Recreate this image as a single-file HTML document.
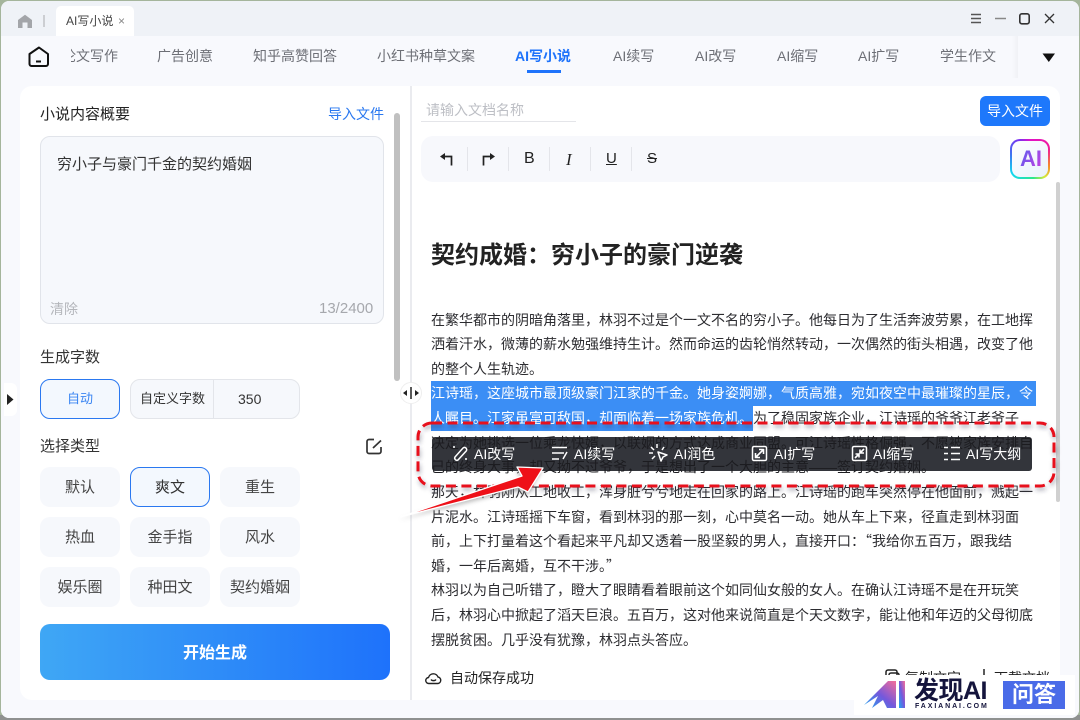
<!DOCTYPE html>
<html lang="zh"><head><meta charset="utf-8"><title>AI写小说</title>
<style>
*{box-sizing:border-box;margin:0;padding:0}
html,body{width:1080px;height:720px;overflow:hidden;background:linear-gradient(180deg,#a5b59c 0,#a5b59c 715px,#8f9190 715px);font-family:"Liberation Sans","Noto Sans CJK SC",sans-serif}
#w{position:absolute;left:1px;top:1px;width:1078px;height:717px;background:#f7f8fc;border-radius:8px;overflow:hidden}
#a{position:absolute;left:-1px;top:-1px;width:1080px;height:720px}
.t{position:absolute;white-space:nowrap;line-height:20px}
.b{position:absolute}
.n{font-size:14px;color:#6d6f76;top:46px}
.chip{position:absolute;width:80px;height:40px;border-radius:10px;background:#f6f8fc;font-size:15px;color:#444;text-align:center;line-height:42px}
.l{position:absolute;left:431px;font-size:14px;line-height:20px;color:#2c2c30;white-space:nowrap}
.m{position:absolute;top:444px;font-size:14px;line-height:20px;color:#fff;white-space:nowrap}
.q{font-family:"Noto Sans CJK SC",sans-serif}
svg{position:absolute;overflow:visible}
</style></head><body><div id="w"><div id="a">
<div class="b" style="left:0;top:0;width:1080px;height:36px;background:#eff2f7"></div>
<div class="b" style="left:0;top:36px;width:1080px;height:684px;background:#f8f9fd"></div>
<svg style="left:17px;top:14px" width="16" height="15" viewBox="0 0 16 15"><path d="M1 14V6L8 .8 15 6v8h-4.500V8.500h-5V14z" fill="#a3a5a9"/></svg>
<div class="b" style="left:43px;top:15px;width:2px;height:12px;background:#ccced2"></div>
<div class="b" style="left:56px;top:6px;width:78px;height:30px;background:#fff;border-radius:5px 5px 0 0"></div>
<div class="t" style="left:66px;top:11px;font-size:12px;color:#444">AI写小说</div>
<div class="t" style="left:118px;top:11px;font-size:12px;color:#888">×</div>
<svg style="left:970px;top:12px" width="80" height="18" fill="none" stroke="#555"><path d="M1 2.500H11M1 6.500H11M1 10.500H11" stroke-width="1.500"/><path d="M25 6.500H36" stroke="#888" stroke-width="1.500"/><rect x="49.800" y="1.800" width="9.400" height="10" rx="2" stroke="#333" stroke-width="1.600"/><path d="M75 2L84 11M84 2L75 11" stroke="#333" stroke-width="1.300"/></svg>
<svg style="left:28px;top:46px" width="22" height="22" fill="none" stroke="#111" stroke-width="2"><path d="M1.500 8L11 1.500 20 8v10a2 2 0 0 1-2 2H3.500a2 2 0 0 1-2-2z" stroke-linejoin="round"/><path d="M8 15.500H13"/></svg>
<div class="b n" style="left:71px;width:47px;height:20px;overflow:hidden;line-height:20px;white-space:nowrap"><span style="display:block;margin-left:-9px">论文写作</span></div>
<div class="t n" style="left:157px">广告创意</div>
<div class="t n" style="left:253px">知乎高赞回答</div>
<div class="t n" style="left:377px">小红书种草文案</div>
<div class="t n" style="left:515px;color:#1e73fb;font-weight:700">AI写小说</div>
<div class="b" style="left:527px;top:70px;width:34px;height:3px;background:#1e73fb"></div>
<div class="t n" style="left:613px">AI续写</div>
<div class="t n" style="left:695px">AI改写</div>
<div class="t n" style="left:777px">AI缩写</div>
<div class="t n" style="left:858px">AI扩写</div>
<div class="t n" style="left:940px">学生作文</div>
<div class="b" style="left:1012px;top:36px;width:6px;height:42px;background:linear-gradient(90deg,#f8f9fd,#f0f1f5)"></div>
<svg style="left:1042px;top:53px" width="14" height="10"><path d="M.5 .5H13L6.800 9z" fill="#111"/></svg>

<div class="b" style="left:20px;top:86px;width:391px;height:614px;background:#fff;border-radius:12px 0 0 12px"></div>
<div class="b" style="left:410px;top:86px;width:650px;height:614px;background:#fff;border-radius:0 12px 12px 0;border-left:2px solid #eaebef"></div>
<div class="t" style="left:40px;top:105px;font-size:15px;color:#222">小说内容概要</div>
<div class="t" style="left:328px;top:104px;font-size:14px;color:#2a78f0">导入文件</div>
<div class="b" style="left:394px;top:113px;width:6px;height:268px;border-radius:3px;background:#c0c0c0"></div>
<div class="b" style="left:40px;top:136px;width:344px;height:188px;border-radius:10px;background:#f6f8fc;border:1px solid #e1e4ea"></div>
<div class="t" style="left:57px;top:155px;font-size:15px;color:#333">穷小子与豪门千金的契约婚姻</div>
<div class="t" style="left:50px;top:299px;font-size:14px;color:#b4b6bb">清除</div>
<div class="t" style="left:319px;top:299px;font-size:15px;color:#a6a8ad">13/2400</div>
<div class="t" style="left:40px;top:348px;font-size:15px;color:#333">生成字数</div>
<div class="chip" style="left:40px;top:379px;background:#f3f8fe;border:1px solid #2a78f0;color:#3a85f2;font-size:13px;line-height:38px">自动</div>
<div class="b" style="left:130px;top:379px;width:170px;height:40px;border-radius:10px;background:#f6f8fc;border:1px solid #e3e5ea"></div>
<div class="b" style="left:213px;top:380px;width:1px;height:38px;background:#e3e5ea"></div>
<div class="t" style="left:140px;top:389px;font-size:13px;color:#333">自定义字数</div>
<div class="t" style="left:238px;top:389px;font-size:14px;color:#333">350</div>
<div class="t" style="left:40px;top:437px;font-size:15px;color:#333">选择类型</div>
<svg style="left:366px;top:438px" width="17" height="17" fill="none" stroke="#333" stroke-width="1.700"><path d="M8 1.500H3a2 2 0 0 0-2 2v10a2 2 0 0 0 2 2h10a2 2 0 0 0 2-2V9"/><path d="M7 10L15 2.500"/></svg>
<div class="chip" style="left:40px;top:467px">默认</div>
<div class="chip" style="left:130px;top:467px;background:#f3f8fe;border:1px solid #2a78f0;color:#333;line-height:40px">爽文</div>
<div class="chip" style="left:220px;top:467px">重生</div>
<div class="chip" style="left:40px;top:517px">热血</div>
<div class="chip" style="left:130px;top:517px">金手指</div>
<div class="chip" style="left:220px;top:517px">风水</div>
<div class="chip" style="left:40px;top:567px">娱乐圈</div>
<div class="chip" style="left:130px;top:567px">种田文</div>
<div class="chip" style="left:220px;top:567px">契约婚姻</div>
<div class="b" style="left:40px;top:624px;width:350px;height:56px;border-radius:10px;background:linear-gradient(90deg,#3fa7f5,#1e72fb);color:#fff;font-size:16px;font-weight:700;text-align:center;line-height:59px">开始生成</div>
<div class="b" style="left:4px;top:383px;width:13px;height:33px;background:#fff;border-radius:0 6px 6px 0"></div>
<svg style="left:7px;top:394px" width="7" height="11"><path d="M0 0L6.500 5.500 0 11z" fill="#222"/></svg>
<div class="b" style="left:400px;top:382px;width:22px;height:22px;border-radius:50%;background:#fff;border:1px solid #eee"></div>
<svg style="left:403px;top:387px" width="16" height="12"><path d="M0 6L4 3V9zM16 6L12 3V9z" fill="#222"/><path d="M8 0V12" stroke="#222" stroke-width="1.500"/></svg>

<div class="t" style="left:426px;top:100px;font-size:14px;color:#bdbfc5">请输入文档名称</div>
<div class="b" style="left:421px;top:121px;width:155px;height:1px;background:#e4e5e9"></div>
<div class="b" style="left:980px;top:96px;width:70px;height:30px;background:#1e78fb;border-radius:6px;color:#fff;font-size:14px;text-align:center;line-height:30px">导入文件</div>
<div class="b" style="left:421px;top:136px;width:579px;height:46px;background:#f7f8fc;border-radius:12px"></div>
<svg style="left:440px;top:152px" width="170" height="16" fill="none"><path d="M0 4.500L5 1V8z" fill="#222"/><path d="M4 4.500H11.500V13.500" stroke="#222" stroke-width="1.700"/><path d="M43.500 13.500V4.500H51" stroke="#222" stroke-width="1.700"/><path d="M55 4.500L50 1V8z" fill="#222"/></svg>
<div class="b" style="left:467px;top:147px;width:1px;height:24px;background:#e4e5ea"></div>
<div class="b" style="left:508px;top:147px;width:1px;height:24px;background:#e4e5ea"></div>
<div class="b" style="left:549px;top:147px;width:1px;height:24px;background:#e4e5ea"></div>
<div class="b" style="left:590px;top:147px;width:1px;height:24px;background:#e4e5ea"></div>
<div class="b" style="left:631px;top:147px;width:1px;height:24px;background:#e4e5ea"></div>
<div class="t" style="left:524px;top:149px;font-size:16px;color:#222">B</div>
<div class="t" style="left:566px;top:150px;font-size:17px;color:#222;font-style:italic;font-family:'Liberation Serif',serif">I</div>
<div class="t" style="left:606px;top:149px;font-size:15px;color:#222;text-decoration:underline">U</div>
<div class="t" style="left:647px;top:149px;font-size:15px;color:#222;text-decoration:line-through">S</div>
<div class="b" style="left:1010px;top:139px;width:40px;height:40px;border-radius:10px;background:conic-gradient(from 0deg,#e012c8,#f01a9a 60deg,#f58a2a 110deg,#d8e83a 140deg,#2ee88a 170deg,#14d8f0 230deg,#3a7af0 280deg,#7a30f0 330deg,#e012c8)"></div>
<div class="b" style="left:1012px;top:141px;width:36px;height:36px;border-radius:8px;background:linear-gradient(135deg,#fff,#e9f1fc)"></div>
<div class="t" style="left:1020px;top:149px;font-size:22px;font-weight:700;background:linear-gradient(120deg,#5a5ef0,#c83ee0);-webkit-background-clip:text;background-clip:text;color:transparent">AI</div>
<div class="b" style="left:1056px;top:182px;width:4px;height:320px;background:#d0d0d0;border-radius:2px"></div>

<div class="t" style="left:431px;top:241px;font-size:24px;line-height:30px;font-weight:700;color:#222">契约成婚：穷小子的豪门逆袭</div>

<div class="b" style="left:431px;top:381px;width:605px;height:25px;background:#3b8ef5"></div>
<div class="b" style="left:431px;top:406px;width:322px;height:25px;background:#3b8ef5"></div>
<div class="b" style="left:432px;top:437px;width:600px;height:34px;background:#33353b;border-radius:3px"></div>
<div class="l" style="top:310px">在繁华都市的阴暗角落里，林羽不过是个一文不名的穷小子。他每日为了生活奔波劳累，在工地挥</div>
<div class="l" style="top:334px">洒着汗水，微薄的薪水勉强维持生计。然而命运的齿轮悄然转动，一次偶然的街头相遇，改变了他</div>
<div class="l" style="top:359px">的整个人生轨迹。</div>
<div class="l" style="top:383px;color:#fff">江诗瑶，这座城市最顶级豪门江家的千金。她身姿婀娜，气质高雅，宛如夜空中最璀璨的星辰，令</div>
<div class="l" style="top:408px;color:#fff">人瞩目。江家虽富可敌国，却面临着一场家族危机。</div>
<div class="l" style="top:408px;left:753px">为了稳固家族企业，江诗瑶的爷爷江老爷子</div>
<div class="l" style="top:433px;color:#1c1c20">决定为她挑选一位乘龙快婿，以联姻的方式达成商业同盟。可江诗瑶性格倔强，不愿被家族安排自</div>
<div class="l" style="top:457px;color:#1c1c20">己的终身大事，却又拗不过爷爷，于是想出了一个大胆的主意——签订契约婚姻。</div>
<div class="l" style="top:482px">那天，林羽刚从工地收工，浑身脏兮兮地走在回家的路上。江诗瑶的跑车突然停在他面前，溅起一</div>
<div class="l" style="top:507px">片泥水。江诗瑶摇下车窗，看到林羽的那一刻，心中莫名一动。她从车上下来，径直走到林羽面</div>
<div class="l" style="top:531px">前，上下打量着这个看起来平凡却又透着一股坚毅的男人，直接开口：<span class="q">“</span>我给你五百万，跟我结</div>
<div class="l" style="top:556px">婚，一年后离婚，互不干涉。<span class="q">”</span></div>
<div class="l" style="top:580px">林羽以为自己听错了，瞪大了眼睛看着眼前这个如同仙女般的女人。在确认江诗瑶不是在开玩笑</div>
<div class="l" style="top:605px">后，林羽心中掀起了滔天巨浪。五百万，这对他来说简直是个天文数字，能让他和年迈的父母彻底</div>
<div class="l" style="top:630px">摆脱贫困。几乎没有犹豫，林羽点头答应。</div>

<svg style="left:450px;top:444px" width="590" height="20" fill="none" stroke="#fff" stroke-width="1.500">
<path d="M5 13L13 4a2.200 2.200 0 0 1 3.200 3L8 16a2.200 2.200 0 0 1-3-3z"/><circle cx="4" cy="3" r="1" fill="#fff" stroke="none"/><circle cx="16" cy="15" r="1" fill="#fff" stroke="none"/>
<path d="M102 3.500H117M102 9H114M102 15H109M113 15L117 8"/>
<path d="M207 0V4M201 3L204 6M199 9H203M202 15L205 12M214 3L212 6"/><path d="M208 8L217 11 213 13 211 17z" stroke-linejoin="round"/>
<rect x="302.500" y="2.500" width="14" height="14" rx="1.500"/><path d="M306 13L313 6M309 5.500H313.500V10M305.500 9V13.500H310" stroke-width="1.600"/>
<rect x="402.500" y="2.500" width="14" height="14" rx="1.500"/><path d="M405 14L408.500 10.500M414 5L410.500 8.500M405.500 10H409V13.500M410 5.500V9H414" stroke-width="1.600"/>
<path d="M494 3.500H498M494 9.500H498M494 15.500H498M501 3.500H510M501 9.500H510M501 15.500H510"/>
</svg>
<div class="m" style="left:474px">AI改写</div>
<div class="m" style="left:574px">AI续写</div>
<div class="m" style="left:674px">AI润色</div>
<div class="m" style="left:774px">AI扩写</div>
<div class="m" style="left:873px">AI缩写</div>
<div class="m" style="left:966px">AI写大纲</div>

<svg style="left:0;top:0" width="1080" height="720" fill="none">
<defs><filter id="sh" x="-10%" y="-30%" width="120%" height="170%"><feGaussianBlur stdDeviation="2"/></filter></defs>
<rect x="418" y="423" width="636" height="63" rx="14" stroke="#33334a" stroke-opacity=".4" stroke-width="3" stroke-dasharray="10 5.500" transform="translate(1 3)" filter="url(#sh)"/>
<rect x="418" y="423" width="636" height="63" rx="14" stroke="#e8101c" stroke-width="3" stroke-dasharray="10 5.500"/>
<path d="M400 517L522 476 517 467 543 468 528 492 518 487z" fill="#777" opacity=".5" transform="translate(-1 3)" filter="url(#sh)"/>
<path d="M400 517L522 476 517 467 543 468 528 492 518 487z" fill="#ee1018" stroke="#fff" stroke-width="1.300" stroke-linejoin="round"/>
</svg>

<svg style="left:425px;top:671px" width="17" height="14" fill="none" stroke="#222" stroke-width="1.400"><path d="M4 12.500a3 3 0 0 1-.5-6A5 5 0 0 1 13 6a3.300 3.300 0 0 1 0 6.500zM6 8.500c1 1.500 4 1.500 5 0"/></svg>
<div class="t" style="left:450px;top:668px;font-size:14px;color:#222">自动保存成功</div>
<svg style="left:885px;top:669px" width="16" height="8" fill="none" stroke="#222" stroke-width="1.500"><rect x="1" y="1" width="11" height="12" rx="2"/><rect x="4" y="4" width="10" height="10" rx="2"/></svg>
<div class="t" style="left:905px;top:668px;font-size:14px;color:#222">复制文字</div>
<svg style="left:980px;top:669px" width="8" height="8"><path d="M4 0V6" stroke="#222" stroke-width="1.500"/></svg>
<div class="t" style="left:994px;top:668px;font-size:14px;color:#222">下载文档</div>
<div class="b" style="left:854px;top:675px;width:221px;height:40px;background:#fff"></div>
<svg style="left:864px;top:680px" width="42" height="30"><defs><linearGradient id="g" x1="0" y1="1" x2="1" y2="0"><stop offset="0" stop-color="#1fa8f0"/><stop offset=".5" stop-color="#7458dc"/><stop offset="1" stop-color="#f66d98"/></linearGradient></defs><path d="M0 25L24 1H32V28H23L19 20 8 28 14 16z" fill="url(#g)"/><rect x="35" y="1" width="6" height="27" fill="url(#g)"/></svg>
<div class="t" style="left:914px;top:678px;font-size:25px;line-height:26px;font-weight:700;color:#14143c;letter-spacing:-.5px">发现AI</div>
<div class="t" style="left:915px;top:702px;font-size:7px;line-height:9px;font-weight:700;color:#14143c;letter-spacing:1.900px">FAXIANAI.COM</div>
<div class="b" style="left:1003px;top:681px;width:62px;height:28px;background:#4a6be8;color:#fff;font-size:22px;line-height:28px;text-align:center;font-weight:700">问答</div>
</div></div></body></html>
